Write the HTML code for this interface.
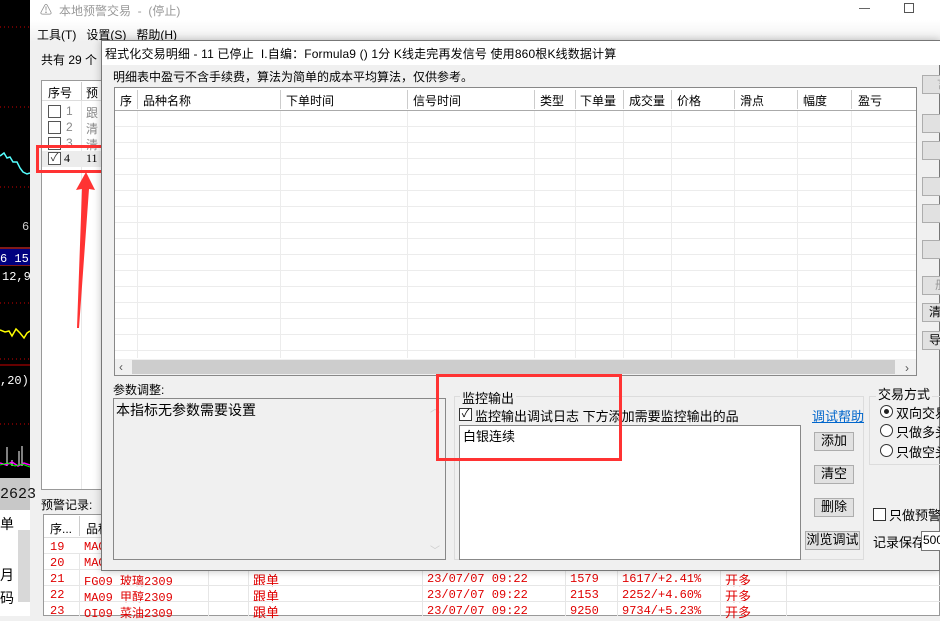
<!DOCTYPE html>
<html><head><meta charset="utf-8"><style>
*{margin:0;padding:0;box-sizing:border-box}
body{width:940px;height:616px;overflow:hidden;background:#f0f0f0;font-family:"Liberation Sans","Noto Sans CJK SC",sans-serif;font-size:12px;color:#000;position:relative}
.a{position:absolute}
.t{position:absolute;white-space:nowrap}
.btn{position:absolute;background:#e1e1e1;border:1px solid #adadad;text-align:center;line-height:16px;font-size:12px}
.cb{position:absolute;width:13px;height:13px;border:1px solid #333;background:#fff}
.red{color:#e00000;font-family:"Liberation Mono","Noto Sans CJK SC",monospace;font-size:12px}
</style></head><body>
<!-- left chart -->
<div class="a" style="left:0;top:0;width:30px;height:478px;background:#000"></div>
<svg class="a" style="left:0;top:0" width="30" height="478">
<g stroke="#c00" stroke-dasharray="1,3"><line x1="0" y1="27" x2="30" y2="27"/><line x1="0" y1="107" x2="30" y2="107"/><line x1="0" y1="187" x2="30" y2="187"/><line x1="0" y1="303" x2="30" y2="303"/><line x1="0" y1="359" x2="30" y2="359"/><line x1="0" y1="424" x2="30" y2="424"/></g>
<polyline points="0,156 4,153 7,158 10,157 13,162 17,162 20,168 23,172 27,174 30,173" fill="none" stroke="#5ff" stroke-width="1.5"/>
<polyline points="0,330 5,332 9,331 12,336 16,329 20,333 24,338 27,333 30,331" fill="none" stroke="#ff0" stroke-width="1.5"/>
<line x1="0" y1="248" x2="30" y2="248" stroke="#f33"/><line x1="0" y1="265" x2="30" y2="265" stroke="#f33"/>
<rect x="0" y="249" width="30" height="16" fill="#00007f"/>
<text x="0" y="262" fill="#fff" font-family="Liberation Mono" font-size="12">6 15</text>
<text x="2" y="280" fill="#fff" font-family="Liberation Mono" font-size="12">12,9</text>
<text x="22" y="230" fill="#ccc" font-family="Liberation Mono" font-size="12">6</text>
<line x1="0" y1="365" x2="30" y2="365" stroke="#c00"/>
<text x="0" y="384" fill="#fff" font-family="Liberation Mono" font-size="12">,20)</text>
<g stroke="#fff"><line x1="7" y1="447" x2="7" y2="466"/><line x1="19" y1="451" x2="19" y2="466"/><line x1="22" y1="446" x2="22" y2="466"/><line x1="12" y1="460" x2="12" y2="466"/></g>
<polyline points="0,463 6,465 12,462 18,466 24,463 30,465" fill="none" stroke="#f0f" stroke-width="1.5"/>
<polyline points="0,465 8,463 15,466 22,464 30,467" fill="none" stroke="#0f0" stroke-width="1"/>
</svg>
<div class="a" style="left:0;top:478px;width:30px;height:32px;background:#c8c8c8"></div>
<div class="t" style="left:0;top:486px;font-size:15px;font-family:'Liberation Mono';color:#111">2623</div>
<div class="a" style="left:0;top:510px;width:30px;height:106px;background:#fff"></div>
<div class="t" style="left:0;top:514px;font-size:14px">单</div>
<div class="t" style="left:0;top:565px;font-size:14px">月</div>
<div class="t" style="left:0;top:588px;font-size:14px">码</div>
<div class="a" style="left:18px;top:530px;width:12px;height:72px;background:#d8d8d8"></div>

<!-- outer window -->
<div class="a" style="left:30px;top:0;width:910px;height:20px;background:#fff"></div>
<div class="t" style="left:40px;top:1px;color:#888">⚠</div>
<div class="t" style="left:59px;top:2px;color:#999">本地预警交易 &nbsp;- &nbsp;(停止)</div>
<div class="a" style="left:859px;top:8px;width:11px;height:1px;background:#666"></div>
<div class="a" style="left:904px;top:3px;width:10px;height:10px;border:1px solid #555"></div>
<div class="a" style="left:30px;top:20px;width:910px;height:22px;background:linear-gradient(#fff,#f0f0f0)"></div>
<div class="t" style="left:37px;top:26px">工具(T) &nbsp;&nbsp;设置(S) &nbsp;&nbsp;帮助(H)</div>
<div class="t" style="left:41px;top:51px">共有 29 个</div>
<!-- left list -->
<div class="a" style="left:41px;top:80px;width:62px;height:410px;background:#fff;border:1px solid #999"></div>
<div class="a" style="left:42px;top:81px;width:60px;height:20px;background:#fff;border-bottom:1px solid #ddd"></div>
<div class="t" style="left:48px;top:84px">序号</div><div class="a" style="left:81px;top:82px;width:1px;height:18px;background:#ccc"></div>
<div class="t" style="left:86px;top:84px">预</div>
<div class="a" style="left:81px;top:101px;width:1px;height:388px;background:#e8e8e8"></div>
<div class="cb" style="left:48px;top:105px;border-color:#555"></div><div class="t" style="left:66px;top:104px;color:#888">1</div><div class="t" style="left:86px;top:104px;color:#888">跟</div>
<div class="cb" style="left:48px;top:121px;border-color:#555"></div><div class="t" style="left:66px;top:120px;color:#888">2</div><div class="t" style="left:86px;top:120px;color:#888">清</div>
<div class="cb" style="left:48px;top:137px;border-color:#555"></div><div class="t" style="left:66px;top:136px;color:#888">3</div><div class="t" style="left:86px;top:136px;color:#888">清</div>
<div class="a" style="left:42px;top:151px;width:60px;height:16px;background:#ececec"></div>
<div class="cb" style="left:48px;top:152px;border-color:#555;font-size:11px;line-height:11px;text-align:center;color:#333">✓</div><div class="t" style="left:64px;top:151px;font-family:'Liberation Serif'">4</div><div class="t" style="left:86px;top:151px;font-family:'Liberation Serif'">11</div>
<div class="a" style="left:36px;top:145px;width:71px;height:28px;border:3px solid #f33"></div>
<svg class="a" style="left:60px;top:168px" width="40" height="165"><polygon points="26,4 35,22 29,21 19,160 17,160 22,21 16,22" fill="#f33"/></svg>

<div class="t" style="left:41px;top:496px">预警记录:</div>
<!-- bottom list -->
<div class="a" style="left:43px;top:514px;width:897px;height:102px;background:#fff;border:1px solid #999"></div>
<div class="t" style="left:50px;top:520px">序...</div><div class="a" style="left:79px;top:516px;width:1px;height:20px;background:#ccc"></div>
<div class="t" style="left:86px;top:520px">品种</div>
<div class="a" style="left:44px;top:537px;width:896px;height:1px;background:#ddd"></div>
<div class="red t" style="left:50px;top:540px">19</div><div class="red t" style="left:84px;top:540px">MAO</div>
<div class="red t" style="left:50px;top:556px">20</div><div class="red t" style="left:84px;top:556px">MAO</div>
<div class="red t" style="left:50px;top:572px">21</div><div class="red t" style="left:84px;top:572px">FG09 玻璃2309</div><div class="red t" style="left:253px;top:570px;font-size:13px">跟单</div><div class="red t" style="left:427px;top:572px">23/07/07 09:22</div><div class="red t" style="left:570px;top:572px">1579</div><div class="red t" style="left:622px;top:572px">1617/+2.41%</div><div class="red t" style="left:725px;top:570px;font-size:13px">开多</div>
<div class="red t" style="left:50px;top:588px">22</div><div class="red t" style="left:84px;top:588px">MA09 甲醇2309</div><div class="red t" style="left:253px;top:586px;font-size:13px">跟单</div><div class="red t" style="left:427px;top:588px">23/07/07 09:22</div><div class="red t" style="left:570px;top:588px">2153</div><div class="red t" style="left:622px;top:588px">2252/+4.60%</div><div class="red t" style="left:725px;top:586px;font-size:13px">开多</div>
<div class="red t" style="left:50px;top:604px">23</div><div class="red t" style="left:84px;top:604px">OI09 菜油2309</div><div class="red t" style="left:253px;top:602px;font-size:13px">跟单</div><div class="red t" style="left:427px;top:604px">23/07/07 09:22</div><div class="red t" style="left:570px;top:604px">9250</div><div class="red t" style="left:622px;top:604px">9734/+5.23%</div><div class="red t" style="left:725px;top:602px;font-size:13px">开多</div>
<svg class="a" style="left:44px;top:553px" width="896" height="63"><g stroke="#e6e6e6"><line x1="0" y1="0.5" x2="896" y2="0.5"/><line x1="0" y1="16.5" x2="896" y2="16.5"/><line x1="0" y1="32.5" x2="896" y2="32.5"/><line x1="0" y1="48.5" x2="896" y2="48.5"/><line x1="35.5" y1="-16" x2="35.5" y2="63"/><line x1="164.5" y1="0" x2="164.5" y2="63"/><line x1="204.5" y1="0" x2="204.5" y2="63"/><line x1="378.5" y1="0" x2="378.5" y2="63"/><line x1="521.5" y1="0" x2="521.5" y2="63"/><line x1="573.5" y1="0" x2="573.5" y2="63"/><line x1="676.5" y1="0" x2="676.5" y2="63"/><line x1="742.5" y1="0" x2="742.5" y2="63"/></g></svg>

<!-- dialog -->
<div class="a" style="left:101px;top:40px;width:839px;height:531px;background:#f0f0f0;border:1px solid #777;box-shadow:0 0 8px rgba(0,0,0,.25)"></div>
<div class="a" style="left:102px;top:41px;width:838px;height:24px;background:#fff"></div>
<div class="t" style="left:105px;top:45px;letter-spacing:0.15px">程式化交易明细 - 11 已停止 &nbsp;I.自编：Formula9 () 1分 K线走完再发信号 使用860根K线数据计算</div>
<div class="t" style="left:113px;top:68px">明细表中盈亏不含手续费，算法为简单的成本平均算法，仅供参考。</div>
<!-- table -->
<div class="a" style="left:114px;top:87px;width:803px;height:289px;background:#fff;border:1px solid #888"></div>
<svg class="a" style="left:115px;top:88px" width="801" height="287">
<g stroke="#ececec"><line x1="0" y1="38.5" x2="801" y2="38.5"/><line x1="0" y1="54.5" x2="801" y2="54.5"/><line x1="0" y1="70.5" x2="801" y2="70.5"/><line x1="0" y1="86.5" x2="801" y2="86.5"/><line x1="0" y1="102.5" x2="801" y2="102.5"/><line x1="0" y1="118.5" x2="801" y2="118.5"/><line x1="0" y1="134.5" x2="801" y2="134.5"/><line x1="0" y1="150.5" x2="801" y2="150.5"/><line x1="0" y1="166.5" x2="801" y2="166.5"/><line x1="0" y1="182.5" x2="801" y2="182.5"/><line x1="0" y1="198.5" x2="801" y2="198.5"/><line x1="0" y1="214.5" x2="801" y2="214.5"/><line x1="0" y1="230.5" x2="801" y2="230.5"/><line x1="0" y1="246.5" x2="801" y2="246.5"/><line x1="0" y1="262.5" x2="801" y2="262.5"/>
<line x1="22.5" y1="23" x2="22.5" y2="270"/><line x1="165.5" y1="23" x2="165.5" y2="270"/><line x1="292.5" y1="23" x2="292.5" y2="270"/><line x1="419.5" y1="23" x2="419.5" y2="270"/><line x1="460.5" y1="23" x2="460.5" y2="270"/><line x1="508.5" y1="23" x2="508.5" y2="270"/><line x1="556.5" y1="23" x2="556.5" y2="270"/><line x1="619.5" y1="23" x2="619.5" y2="270"/><line x1="682.5" y1="23" x2="682.5" y2="270"/><line x1="736.5" y1="23" x2="736.5" y2="270"/></g>
<line x1="0" y1="22.5" x2="801" y2="22.5" stroke="#aaa"/>
<g stroke="#ccc"><line x1="22.5" y1="2" x2="22.5" y2="21"/><line x1="165.5" y1="2" x2="165.5" y2="21"/><line x1="292.5" y1="2" x2="292.5" y2="21"/><line x1="419.5" y1="2" x2="419.5" y2="21"/><line x1="460.5" y1="2" x2="460.5" y2="21"/><line x1="508.5" y1="2" x2="508.5" y2="21"/><line x1="556.5" y1="2" x2="556.5" y2="21"/><line x1="619.5" y1="2" x2="619.5" y2="21"/><line x1="682.5" y1="2" x2="682.5" y2="21"/><line x1="736.5" y1="2" x2="736.5" y2="21"/></g>
<rect x="0" y="271" width="801" height="16" fill="#f0f0f0"/><rect x="17" y="272" width="763" height="14" fill="#cdcdcd"/>
<text x="4" y="283" font-size="12" fill="#555">‹</text><text x="790" y="284" font-size="12" fill="#555">›</text>
</svg>
<div class="t" style="left:120px;top:92px">序</div><div class="t" style="left:143px;top:92px">品种名称</div><div class="t" style="left:286px;top:92px">下单时间</div><div class="t" style="left:413px;top:92px">信号时间</div><div class="t" style="left:540px;top:92px">类型</div><div class="t" style="left:580px;top:92px">下单量</div><div class="t" style="left:629px;top:92px">成交量</div><div class="t" style="left:677px;top:92px">价格</div><div class="t" style="left:740px;top:92px">滑点</div><div class="t" style="left:803px;top:92px">幅度</div><div class="t" style="left:858px;top:92px">盈亏</div>
<!-- right side buttons -->
<div class="btn" style="left:922px;top:75px;width:20px;height:19px;color:#999;text-align:left;padding-left:14px">言</div>
<div class="btn" style="left:922px;top:114px;width:20px;height:19px"></div>
<div class="btn" style="left:922px;top:141px;width:20px;height:19px"></div>
<div class="btn" style="left:922px;top:177px;width:20px;height:19px"></div>
<div class="btn" style="left:922px;top:204px;width:20px;height:19px"></div>
<div class="btn" style="left:922px;top:240px;width:20px;height:19px"></div>
<div class="btn" style="left:922px;top:276px;width:20px;height:19px;color:#999;text-align:left;padding-left:12px">册</div>
<div class="btn" style="left:922px;top:303px;width:20px;height:19px;text-align:left;padding-left:6px">清</div>
<div class="btn" style="left:922px;top:331px;width:20px;height:19px;text-align:left;padding-left:6px">导</div>
<!-- params -->
<div class="t" style="left:113px;top:381px">参数调整:</div>
<div class="a" style="left:113px;top:398px;width:333px;height:162px;border:1px solid #888;background:#f0f0f0"></div>
<div class="t" style="left:116px;top:400px;font-size:14px">本指标无参数需要设置</div>
<div class="t" style="left:430px;top:400px;color:#ccc;font-size:10px">︿</div>
<div class="t" style="left:430px;top:542px;color:#ccc;font-size:10px">﹀</div>
<!-- monitor group -->
<div class="a" style="left:454px;top:396px;width:410px;height:164px;border:1px solid #dcdcdc"></div>
<div class="t" style="left:460px;top:388px;font-size:13px;background:#f0f0f0;padding:0 2px">监控输出</div>
<div class="cb" style="left:459px;top:408px;font-size:11px;line-height:11px;text-align:center">✓</div>
<div class="t" style="left:475px;top:406px;font-size:13px">监控输出调试日志 下方添加需要监控输出的品</div>
<div class="t" style="left:812px;top:406px;font-size:13px;color:#06c;text-decoration:underline">调试帮助</div>
<div class="a" style="left:459px;top:425px;width:342px;height:135px;background:#fff;border:1px solid #888"></div>
<div class="t" style="left:463px;top:426px;font-size:13px">白银连续</div>
<div class="btn" style="left:814px;top:432px;width:40px;height:19px;font-size:13px">添加</div>
<div class="btn" style="left:814px;top:465px;width:40px;height:19px;font-size:13px">清空</div>
<div class="btn" style="left:814px;top:498px;width:40px;height:19px;font-size:13px">删除</div>
<div class="btn" style="left:805px;top:531px;width:55px;height:19px;font-size:13px">浏览调试</div>
<div class="a" style="left:436px;top:374px;width:186px;height:87px;border:3px solid #f33"></div>
<!-- trade mode -->
<div class="a" style="left:869px;top:396px;width:80px;height:69px;border:1px solid #dcdcdc"></div>
<div class="t" style="left:876px;top:384px;font-size:13px;background:#f0f0f0;padding:0 2px">交易方式</div>
<div class="a" style="left:880px;top:405px;width:13px;height:13px;border:1px solid #333;border-radius:50%;background:#fff"></div><div class="a" style="left:884px;top:409px;width:5px;height:5px;border-radius:50%;background:#222"></div>
<div class="t" style="left:896px;top:403px;font-size:13px">双向交易</div>
<div class="a" style="left:880px;top:424px;width:13px;height:13px;border:1px solid #333;border-radius:50%;background:#fff"></div><div class="t" style="left:896px;top:422px;font-size:13px">只做多头</div>
<div class="a" style="left:880px;top:444px;width:13px;height:13px;border:1px solid #333;border-radius:50%;background:#fff"></div><div class="t" style="left:896px;top:442px;font-size:13px">只做空头</div>
<div class="cb" style="left:873px;top:508px"></div><div class="t" style="left:889px;top:505px;font-size:13px">只做预警转</div>
<div class="t" style="left:873px;top:532px;font-size:13px">记录保存</div>
<div class="a" style="left:921px;top:531px;width:20px;height:20px;background:#fff;border:1px solid #777"></div>
<div class="t" style="left:923px;top:533px;font-size:12px">500</div>
</body></html>
